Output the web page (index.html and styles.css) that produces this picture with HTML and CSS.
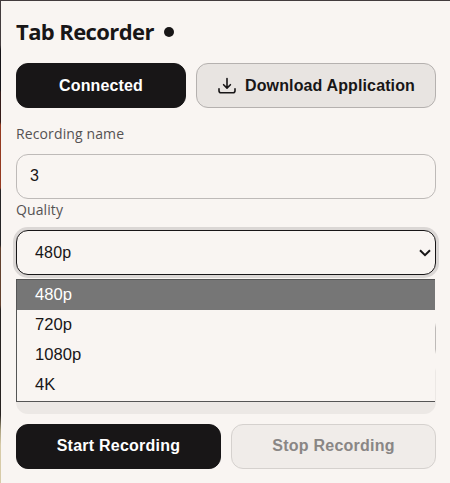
FILE: index.html
```html
<!DOCTYPE html>
<html lang="en">
<head>
<meta charset="utf-8">
<title>Tab Recorder</title>
<link rel="stylesheet" href="styles.css">
</head>
<body>
<main class="panel">
  <header class="header"><h1 class="title">Tab Recorder</h1><span class="status-dot"></span></header>
  <div class="row top-actions">
    <button class="btn primary">Connected</button>
    <button class="btn secondary">
      <svg class="icon" width="20" height="20" viewBox="0 0 20 20" fill="none" stroke="currentColor" stroke-width="1.6" stroke-linecap="round" stroke-linejoin="round"><path d="M10 2.5v9.4M6.6 8.7 10 12.1l3.4-3.4M2 12.8v2q0 2 2 2h12q2 0 2-2v-2"/></svg>
      <span class="download-text">Download Application</span>
    </button>
  </div>
  <div class="label name-label">Recording name</div>
  <div class="field name-field">3</div>
  <div class="label quality-label">Quality</div>
  <div class="select-wrap">
    <div class="field select">480p
      <svg class="chevron" width="12" height="8" viewBox="0 0 12 8" fill="none" stroke="currentColor" stroke-width="2"><path d="M1 1.2 6 6.2l5-5"/></svg>
    </div>
    <div class="menu">
      <div class="option selected">480p</div>
      <div class="option">720p</div>
      <div class="option">1080p</div>
      <div class="option">4K</div>
    </div>
  </div>
  <div class="field covered-field"></div>
  <div class="info"></div>
  <div class="row bottom-actions">
    <button class="btn primary">Start Recording</button>
    <button class="btn secondary disabled">Stop Recording</button>
  </div>
</main>
</body>
</html>
```
FILE: styles.css
```css
* { box-sizing: border-box; }
body {
  margin: 0;
  height: 483px;
  overflow: hidden;
  padding: 1px 0 0 1px;
  background: linear-gradient(#433c3e 0 45px, #161317 50px 90px, #351b18 92px 122px, #943a20 125px 188px, #252426 190px 245px, #62402d 248px 305px, #272220 310px 415px, #aaa07f 430px, #d7cba8 445px);
  font-family: "Liberation Sans", Arial, sans-serif;
  font-size: 16px;
  color: #181617;
}
.panel { height: 482px; padding: 15px 14px 14px 15px; background: #f9f5f2; }
.header { display: flex; align-items: center; height: 32px; gap: 10px; }
.title {
  margin: 0;
  width: 138px;
  white-space: nowrap;
  font: 700 22px/30px "Open Sans", "Noto Sans", sans-serif;
  letter-spacing: -0.6px;
  padding-bottom: 2px;
}
.status-dot { width: 10px; height: 10px; border-radius: 50%; background: #181617; }
.row { display: grid; gap: 10px; }
.top-actions { grid-template-columns: 170px 240px; margin-top: 15px; }
.bottom-actions { grid-template-columns: 205px 205px; margin-top: 10px; }
.btn {
  display: flex;
  align-items: center;
  justify-content: center;
  gap: 8px;
  height: 45px;
  padding: 0;
  border: 1px solid #181617;
  border-radius: 12px;
  font: 700 16px/18px "Liberation Sans", Arial, sans-serif;
  letter-spacing: 0.13px;
  white-space: nowrap;
}
.bottom-actions .btn { padding-bottom: 2px; letter-spacing: 0.24px; }
.primary { background: #181617; color: #fff; }
.secondary { background: #e8e4e1; border-color: #b5b1af; color: #181617; }
.disabled { background: #f0ece9; border-color: #d5d1ce; color: #898685; }
.label {
  height: 20px;
  font: 400 14px/20px "Open Sans", "Noto Sans", sans-serif;
  color: #555253;
}
.name-label { margin-top: 16px; letter-spacing: 0.12px; }
.quality-label { margin-top: 1px; letter-spacing: 0.1px; }
.field {
  display: flex;
  align-items: center;
  height: 45px;
  padding: 0 13px;
  border: 1px solid #bebab8;
  border-radius: 12px;
  background: #f9f5f2;
}
.name-field { margin-top: 10px; padding-bottom: 2px; }
.select-wrap { position: relative; margin-top: 10px; }
.select {
  justify-content: space-between;
  padding: 0 4px 0 18px;
  border-color: #181617;
  box-shadow: 0 0 0 3px #dbd7d5;
  letter-spacing: 0.2px;
}
.menu {
  position: absolute;
  z-index: 2;
  top: 49px;
  left: 0;
  width: 419px;
  height: 123px;
  border: 1px solid #555;
  border-width: 1px 0 1px 1px;
  background: #f9f5f2;
}
.option { height: 30px; padding-left: 18px; font-size: 16.6px; line-height: 30px; }
.selected { background: #767676; color: #fff; }
.covered-field { margin-top: 41px; }
.info { height: 53px; border-radius: 12px; background: #ece8e5; }
```
